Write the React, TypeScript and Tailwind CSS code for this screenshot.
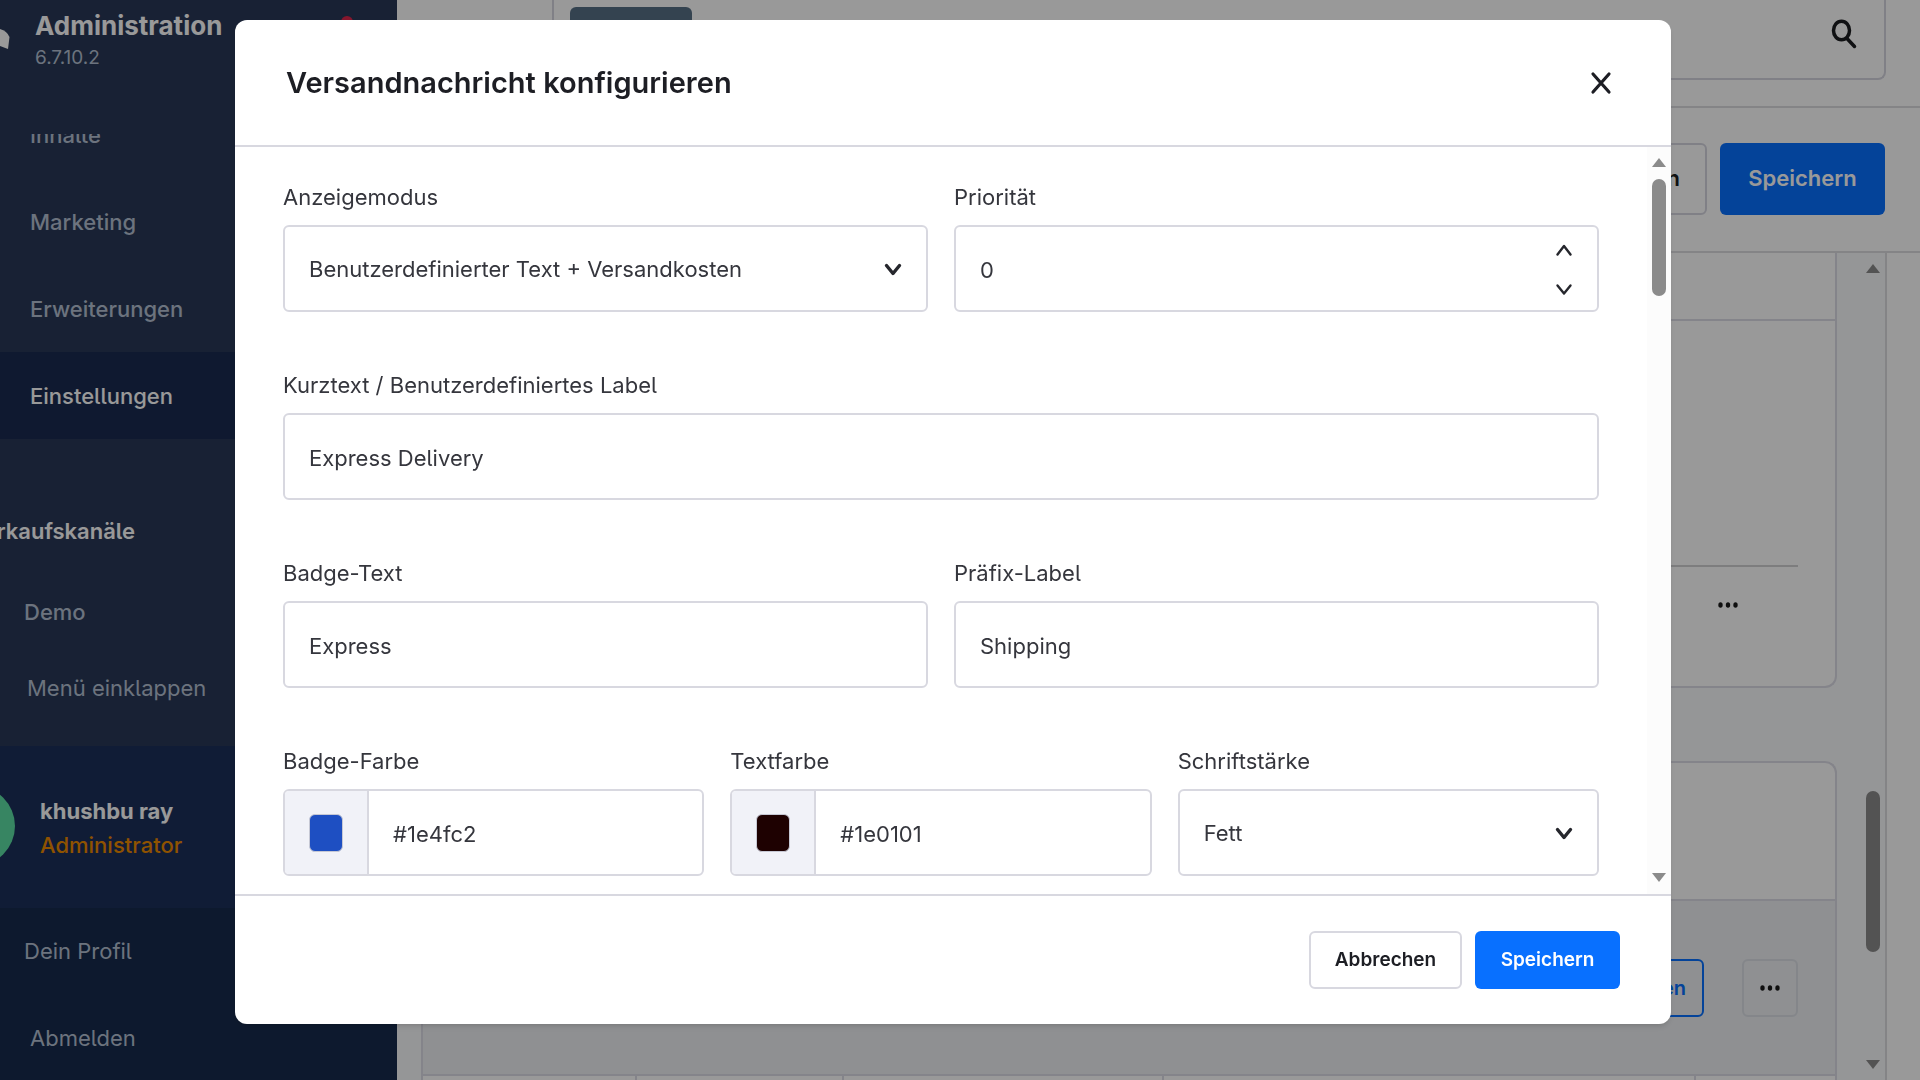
import React, { useState } from 'react';

const MENU_ITEMS = [
  { label: 'Inhalte', active: false },
  { label: 'Marketing', active: false },
  { label: 'Erweiterungen', active: false },
  { label: 'Einstellungen', active: true },
];

const Chevron: React.FC<{ up?: boolean; bold?: boolean; className?: string }> = ({ up, bold, className }) => (
  <svg width="18" height="14" viewBox="0 0 18 14" fill="none" className={className} aria-hidden="true">
    <path
      d={up ? 'M2.5 11.5L9 3L15.5 11.5' : 'M2.5 2.5L9 10.5L15.5 2.5'}
      stroke="#26272d"
      strokeWidth={bold ? 3.4 : 2.4}
      strokeLinecap="round"
      strokeLinejoin="round"
    />
  </svg>
);

const Dots = () => (
  <svg width="22" height="8" viewBox="0 0 22 8" fill="#1a1a1a" aria-hidden="true">
    <ellipse cx="3.5" cy="4" rx="2.2" ry="2.8" />
    <ellipse cx="11" cy="4" rx="2.2" ry="2.8" />
    <ellipse cx="18.5" cy="4" rx="2.2" ry="2.8" />
  </svg>
);

const Arrow: React.FC<{ up?: boolean }> = ({ up }) => (
  <svg width="14" height="9" viewBox="0 0 14 9" fill="#8b8b8b" aria-hidden="true">
    <path d={up ? 'M7 0L14 9H0Z' : 'M0 0H14L7 9Z'} />
  </svg>
);

interface FieldProps {
  id: string;
  label: string;
  children: React.ReactNode;
}

const Field: React.FC<FieldProps> = ({ id, label, children }) => (
  <div className="flex min-w-0 flex-1 flex-col gap-3">
    <label htmlFor={id} className="text-[22px] leading-8 text-[#35363d]">
      {label}
    </label>
    <div className="relative flex h-[87px] overflow-hidden rounded-md border-2 border-[#d8d8e0] bg-white">{children}</div>
  </div>
);

const controlClass = 'h-full w-full min-w-0 flex-1 appearance-none bg-transparent px-6 pt-0.5 text-[22px] text-[#35363d] outline-none';

const TextField: React.FC<{ id: string; label: string; initial: string }> = ({ id, label, initial }) => (
  <Field id={id} label={label}>
    <input id={id} type="text" defaultValue={initial} className={controlClass} />
  </Field>
);

const SelectField: React.FC<{ id: string; label: string; options: string[] }> = ({ id, label, options }) => (
  <Field id={id} label={label}>
    <select id={id} className={controlClass}>
      {options.map(o => (
        <option key={o}>{o}</option>
      ))}
    </select>
    <Chevron bold className="pointer-events-none absolute right-6 top-9" />
  </Field>
);

const ColorField: React.FC<{ id: string; label: string; initial: string }> = ({ id, label, initial }) => {
  const [color, setColor] = useState(initial);
  return (
    <Field id={id} label={label}>
      <div className="flex w-[84px] shrink-0 items-center justify-center border-r-2 border-[#d8d8e0] bg-[#f1f2f8]">
        <span className="h-[38px] w-[34px] rounded-md border border-[#c6c8d4]" style={{ backgroundColor: color }} />
      </div>
      <input id={id} type="text" value={color} onChange={e => setColor(e.target.value)} className={controlClass} />
    </Field>
  );
};

const NumberField: React.FC<{ id: string; label: string }> = ({ id, label }) => {
  const [value, setValue] = useState(0);
  return (
    <Field id={id} label={label}>
      <input
        id={id}
        type="text"
        inputMode="numeric"
        value={value}
        onChange={e => setValue(Number(e.target.value) || 0)}
        className={controlClass}
      />
      <div className="flex flex-col justify-center gap-[26px] pt-[3px] pr-6">
        <button type="button" aria-label="Erhöhen" onClick={() => setValue(value + 1)}>
          <Chevron up />
        </button>
        <button type="button" aria-label="Verringern" onClick={() => setValue(value - 1)}>
          <Chevron />
        </button>
      </div>
    </Field>
  );
};

const Sidebar = () => (
  <aside className="flex w-[397px] shrink-0 flex-col overflow-hidden bg-[#293857] text-[#b4c0d2]">
    <header className="flex h-[134px] shrink-0 items-start">
      <svg width="10" height="60" viewBox="0 0 10 60" className="shrink-0" aria-hidden="true">
        <path d="M0 29Q7 31 9.500 37L8 49L0 46Z" fill="#fff" />
      </svg>
      <div className="pl-[25px] pt-2">
        <div className="text-[26px] leading-9 font-bold text-white">Administration</div>
        <div className="text-[19px] leading-7">6.7.10.2</div>
      </div>
      <span className="ml-auto mt-4 mr-11 size-3 rounded-full bg-[#e0264b]" />
    </header>
    <nav className="shrink-0 overflow-hidden">
      <ul className="-mt-[43px]">
        {MENU_ITEMS.map(item => (
          <li key={item.label}>
            <a
              href="#"
              className={
                item.active
                  ? 'flex h-[87px] items-center bg-[#192b50] pt-0.5 pl-[30px] text-[22px] font-medium text-white'
                  : 'flex h-[87px] items-center pt-0.5 pl-[30px] text-[22px] font-medium'
              }
            >
              {item.label}
            </a>
          </li>
        ))}
      </ul>
    </nav>
    <div className="mt-2 flex h-[100px] w-[135px] shrink-0 flex-col items-end justify-end text-[22px] leading-8 font-semibold text-white">
      Verkaufskanäle
    </div>
    <a href="#" className="mt-[49px] pl-6 text-[22px] leading-8 font-medium">
      Demo
    </a>
    <button type="button" className="mt-11 pl-[27px] text-left text-[22px] leading-8">
      Menü einklappen
    </button>
    <section className="mt-[42px] flex h-[162px] shrink-0 bg-[#1b2f5a]">
      <div className="mt-10 -ml-[65px] size-20 shrink-0 rounded-full bg-[#5cdea3]" />
      <div className="pt-12 pl-[25px] text-[22px] leading-[34px]">
        <div className="font-bold text-white">khushbu ray</div>
        <div className="font-medium text-[#ee8a00]">Administrator</div>
      </div>
    </section>
    <div className="flex flex-1 flex-col bg-[#172b4d] text-[22px]">
      <a href="#" className="flex h-[87px] shrink-0 items-center pl-6">
        Dein Profil
      </a>
      <a href="#" className="flex h-[87px] shrink-0 items-center pl-[30px]">
        Abmelden
      </a>
    </div>
  </aside>
);

const Background = () => (
  <div className="flex h-screen w-full overflow-hidden bg-white">
    <Sidebar />
    <main className="flex min-w-0 flex-1 flex-col">
      <div className="h-[108px] shrink-0 border-b-2 border-[#dcdce0] pr-[34px] pl-[155px]">
        <div className="flex h-20 items-start justify-between rounded-b-lg border-x-2 border-b-2 border-[#d6d6e0] pl-4">
          <span className="mt-[7px] h-16 w-[122px] rounded-md bg-[#587085]" />
          <button type="button" aria-label="Suchen" className="mt-[17px] mr-6">
            <svg width="30" height="34" viewBox="0 0 30 34" fill="none" stroke="#1c1d20" strokeWidth="3.5" strokeLinecap="round">
              <ellipse cx="11.500" cy="13.500" rx="8" ry="9.300" />
              <path d="M17 21.500L24.500 29.500" />
            </svg>
          </button>
        </div>
      </div>
      <div className="flex h-[145px] shrink-0 items-center justify-end gap-[13px] border-b-2 border-[#dcdce0] pr-[35px] pb-0.5">
        <button type="button" className="h-[72px] rounded-md border-2 border-[#d6d6e0] px-[25px] text-[22px] font-semibold text-[#1c1d20]">
          Abbrechen
        </button>
        <button type="button" className="h-[72px] w-[165px] rounded-md bg-[#0870ff] text-[22px] font-semibold text-white">
          Speichern
        </button>
      </div>
      <div className="flex min-h-0 flex-1">
        <div className="flex min-w-0 flex-1 flex-col gap-[73px] bg-[#f9fafc] pl-6">
          <section className="flex h-[435px] shrink-0 flex-col rounded-b-xl border-2 border-t-0 border-[#dcdce6] bg-white">
            <div className="h-[68px] border-b-2 border-[#dcdce6]" />
            <div className="mx-[37px] h-[246px] border-b-2 border-[#d0d0d2]" />
            <div className="flex h-[76px] items-center justify-end pr-24">
              <button type="button" aria-label="Aktionen">
                <Dots />
              </button>
            </div>
          </section>
          <section className="flex flex-1 flex-col rounded-t-xl border-2 border-b-0 border-[#dcdce6] bg-white">
            <div className="h-[138px] shrink-0 border-b-2 border-[#dcdce6]" />
            <div className="flex h-[175px] shrink-0 items-center justify-end gap-[38px] border-b-2 border-[#dcdce6] bg-[#eef0f3] pr-[37px]">
              <button type="button" className="h-[58px] rounded-md border-2 border-[#0870ff] px-4 text-xl font-semibold text-[#0870ff]">
                Hinzufügen
              </button>
              <button
                type="button"
                aria-label="Mehr"
                className="flex h-[58px] w-14 items-center justify-center rounded-md border-2 border-[#dcdfe6]"
              >
                <Dots />
              </button>
            </div>
            <div className="flex flex-1">
              <span className="w-[214px] border-r-2 border-[#dcdce6]" />
              <span className="w-[207px] border-r-2 border-[#dcdce6]" />
              <span className="w-[320px] border-r-2 border-[#dcdce6]" />
              <span className="flex-1 border-r-2 border-[#dcdce6]" />
              <span className="w-[139px]" />
            </div>
          </section>
        </div>
        <div className="flex w-[50px] shrink-0 flex-col items-end border-r-2 border-[#dcdce0] bg-[#f9fafc] pt-[11px] pr-[5px] pb-[11px]">
          <Arrow up />
          <div className="mt-[518px] h-[161px] w-3.5 rounded-full bg-[#8b8b8b]" />
          <div className="mt-auto">
            <Arrow />
          </div>
        </div>
        <div className="w-[33px] shrink-0" />
      </div>
    </main>
  </div>
);

const ShippingMessageModal = () => (
  <div className="fixed inset-0 flex bg-black/40 pt-5 pr-[249px] pb-14 pl-[235px]">
    <div
      role="dialog"
      aria-modal="true"
      aria-labelledby="modal-title"
      className="flex min-w-0 flex-1 flex-col overflow-hidden rounded-xl bg-white shadow-md"
    >
      <header className="flex h-[127px] shrink-0 items-center justify-between border-b-2 border-[#d8d8e0] pr-[58px] pl-[51px]">
        <h1 id="modal-title" className="text-[29px] font-semibold text-[#1d1e24]">
          Versandnachricht konfigurieren
        </h1>
        <button type="button" aria-label="Schließen">
          <svg width="24" height="26" viewBox="0 0 24 26" fill="none" stroke="#1d1e24" strokeWidth="3.2" strokeLinecap="round">
            <path d="M4 4L20 22M20 4L4 22" />
          </svg>
        </button>
      </header>
      <div className="flex min-h-0 flex-1">
        <form className="flex min-w-0 flex-1 flex-col gap-[57px] overflow-hidden px-12 pt-[34px]">
          <div className="flex gap-[26px]">
            <SelectField id="mode" label="Anzeigemodus" options={['Benutzerdefinierter Text + Versandkosten']} />
            <NumberField id="priority" label="Priorität" />
          </div>
          <div className="flex">
            <TextField id="short-text" label="Kurztext / Benutzerdefiniertes Label" initial="Express Delivery" />
          </div>
          <div className="flex gap-[26px]">
            <TextField id="badge-text" label="Badge-Text" initial="Express" />
            <TextField id="prefix" label="Präfix-Label" initial="Shipping" />
          </div>
          <div className="flex gap-[26px]">
            <ColorField id="badge-color" label="Badge-Farbe" initial="#1e4fc2" />
            <ColorField id="text-color" label="Textfarbe" initial="#1e0101" />
            <SelectField id="weight" label="Schriftstärke" options={['Fett', 'Normal']} />
          </div>
        </form>
        <div className="flex w-6 shrink-0 flex-col items-center bg-[#fcfcfc] pt-[11px] pb-3">
          <Arrow up />
          <div className="mt-3 h-[117px] w-3.5 rounded-full bg-[#8b8b8b]" />
          <div className="mt-auto">
            <Arrow />
          </div>
        </div>
      </div>
      <footer className="flex h-[130px] shrink-0 items-center justify-end gap-[13px] border-t-2 border-[#d8d8e0] pr-[51px]">
        <button type="button" className="h-[58px] w-[153px] rounded-md border-2 border-[#d8d8e0] text-[19px] font-semibold text-[#1d1e24]">
          Abbrechen
        </button>
        <button type="button" className="h-[58px] w-[145px] rounded-md bg-[#0870ff] text-[19px] font-semibold text-white">
          Speichern
        </button>
      </footer>
    </div>
  </div>
);

export default function App() {
  return (
    <div className="font-[Inter,sans-serif] [font-feature-settings:'cv05']">
      <Background />
      <ShippingMessageModal />
    </div>
  );
}
